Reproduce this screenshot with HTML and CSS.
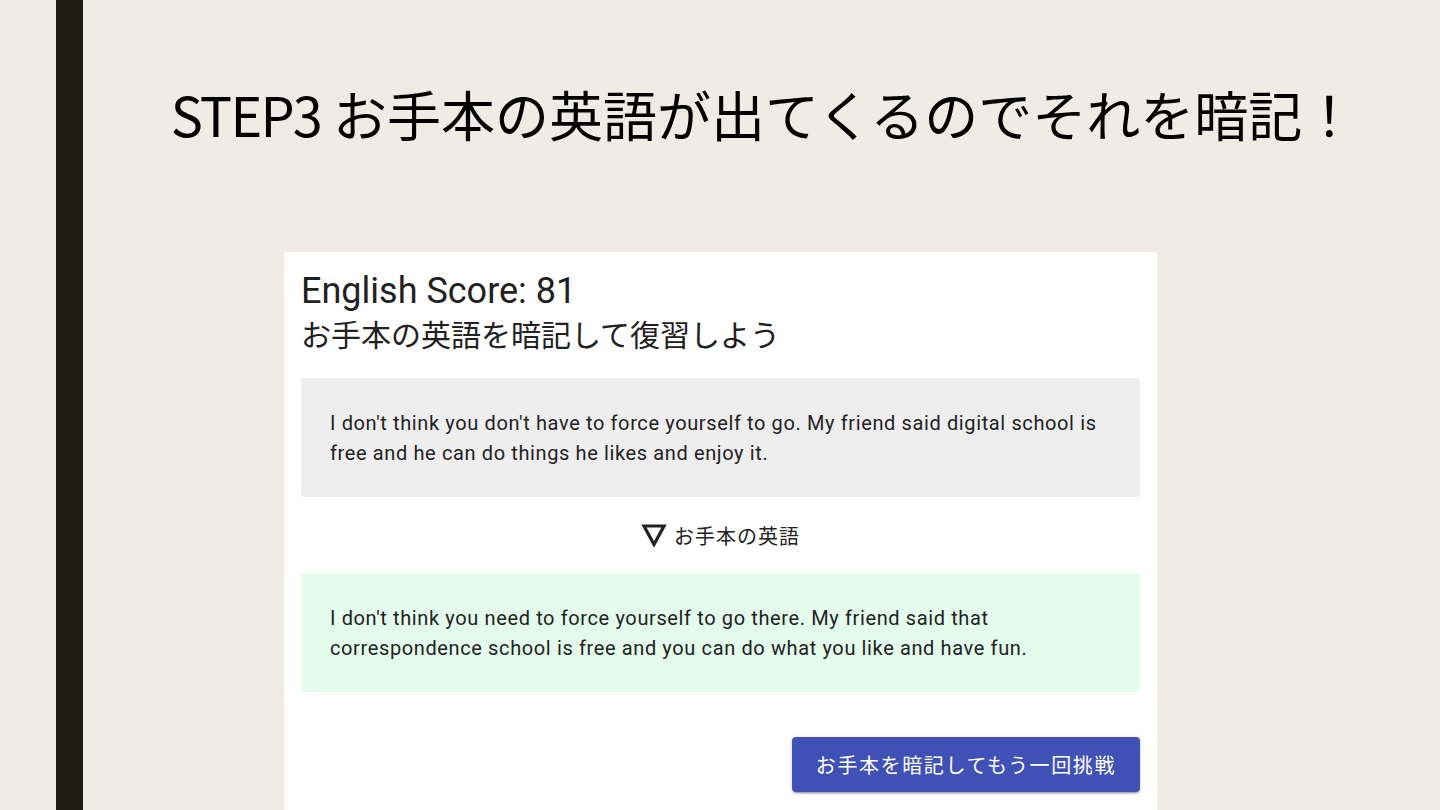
FILE: index.html
```html
<!DOCTYPE html>
<html lang="ja">
<head>
<meta charset="utf-8">
<link rel="stylesheet" href="styles.css">
</head>
<body>
<div class="slide">
  <div class="gutter"></div>
  <div class="bar"></div>
  <main class="main">
    <h1 class="title"><span class="title-latin">STEP3</span> お手本の英語が出てくるのでそれを暗記！</h1>
    <section class="card">
      <h2 class="score">English Score: 81</h2>
      <p class="lead">お手本の英語を暗記して復習しよう</p>
      <div class="box box-user">I don't think you don't have to force yourself to go. My friend said digital school is free and he can do things he likes and enjoy it.</div>
      <div class="toggle">
        <svg class="tri" width="26" height="24" viewBox="0 0 26 24"><path d="M3 3 H23 L13 21.5 Z" fill="none" stroke="#222" stroke-width="3.2" stroke-linejoin="miter"/></svg>
        <span>お手本の英語</span>
      </div>
      <div class="box box-model">I don't think you need to force yourself to go there. My friend said that correspondence school is free and you can do what you like and have fun.</div>
      <div class="actions">
        <button class="btn">お手本を暗記してもう一回挑戦</button>
      </div>
    </section>
  </main>
</div>
</body>
</html>
```
FILE: styles.css
```css
html, body {
  margin: 0;
  padding: 0;
  height: 100%;
  overflow: hidden;
}
body {
  background: #efece5;
  font-family: Roboto, "Noto Sans CJK JP", sans-serif;
  color: #212121;
}
.slide {
  display: flex;
  height: 810px;
}
.gutter {
  width: 56px;
  flex: none;
}
.bar {
  width: 27px;
  flex: none;
  background: #1c1c10;
}
.main {
  flex: 1;
  display: flex;
  flex-direction: column;
}
.title {
  margin: 83px 0 0 0;
  font-family: "Noto Sans CJK JP", sans-serif;
  font-weight: 400;
  font-size: 54px;
  line-height: 62px;
  color: #000;
  text-align: center;
  padding-left: 4px;
}
.title-latin {
  letter-spacing: -1.8px;
}
.card {
  margin: 107px 0 0 201px;
  width: 873px;
  flex: 1;
  background: #fff;
  padding: 17px 17px 0 17px;
  box-sizing: border-box;
}
.score {
  margin: 0;
  font-weight: 400;
  font-size: 36px;
  line-height: 44px;
  color: #212121;
}
.lead {
  margin: 0;
  font-family: "Noto Sans CJK JP", sans-serif;
  font-size: 30px;
  line-height: 41px;
  color: #212121;
}
.box {
  margin-top: 24px;
  padding: 30px 29px 29px;
  border-radius: 4px;
  font-size: 20px;
  letter-spacing: 0.62px;
  line-height: 30px;
  color: #222;
}
.box-user {
  background: #eeeeee;
}
.box-model {
  background: #e3fcec;
  margin-top: 0;
}
.toggle {
  display: flex;
  justify-content: center;
  align-items: center;
  gap: 7px;
  height: 76px;
  font-family: "Noto Sans CJK JP", sans-serif;
  font-size: 20px;
  letter-spacing: 1px;
  color: #222;
}
.tri {
  display: block;
}
.actions {
  display: flex;
  justify-content: flex-end;
  margin-top: 45px;
}
.btn {
  background: #3f51b5;
  color: #fff;
  border: none;
  border-radius: 4px;
  height: 55px;
  padding: 0 24px;
  font-family: "Noto Sans CJK JP", sans-serif;
  font-size: 20px;
  letter-spacing: 1.6px;
  box-shadow: 0 3px 1px -2px rgba(0,0,0,.2), 0 2px 2px 0 rgba(0,0,0,.14), 0 1px 5px 0 rgba(0,0,0,.12);
}
```
